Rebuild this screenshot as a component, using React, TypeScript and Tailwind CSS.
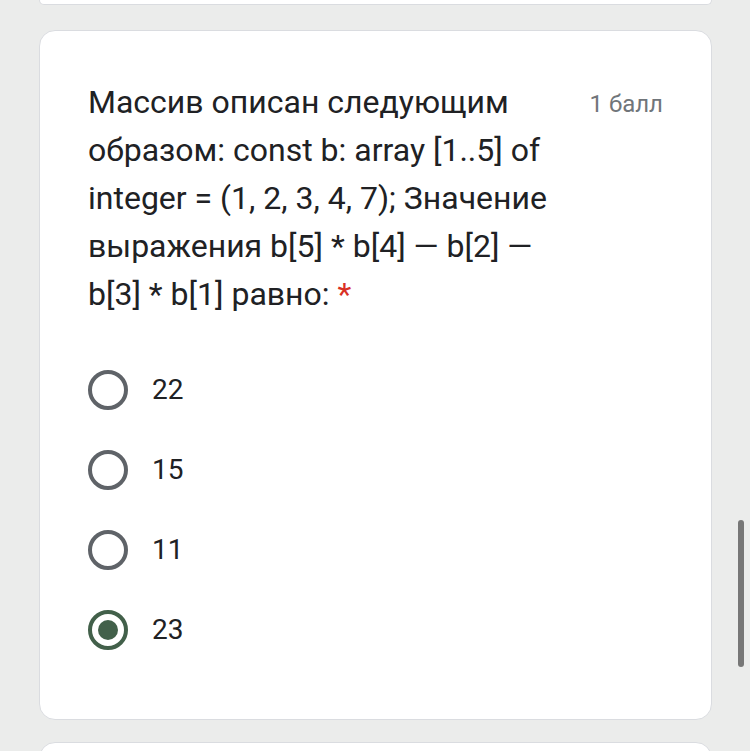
import React from "react";

const options = [
  { label: "22", checked: false },
  { label: "15", checked: false },
  { label: "11", checked: false },
  { label: "23", checked: true },
];

const lines = [
  "Массив описан следующим",
  "образом: const b: array [1..5] of",
  "integer = (1, 2, 3, 4, 7); Значение",
  "выражения b[5] * b[4] — b[2] —",
];

function Radio({ checked }: { checked: boolean }) {
  return (
    <div
      className={`w-[40px] h-[40px] rounded-full border-[4px] flex items-center justify-center ${
        checked ? "border-[#42604a]" : "border-[#5f6368]"
      }`}
    >
      {checked && <div className="w-[20px] h-[20px] rounded-full bg-[#42604a]" />}
    </div>
  );
}

export default function App() {
  return (
    <div
      className="relative w-[750px] h-[751px] overflow-hidden bg-[#ebeceb]"
      style={{ fontFamily: "Roboto, 'Noto Sans', sans-serif" }}
    >
      <div className="flex flex-col pl-[39px] pr-[38px]">
        <div className="h-[5px] bg-white border-[1.5px] border-t-0 border-[#dadce0] rounded-b-[16px]" />
        <div className="mt-[25px] h-[690px] bg-white border-[1.5px] border-[#dadce0] rounded-[16px] px-[48px] pt-[47px]">
          <div className="flex justify-between">
            <div className="text-[32px] leading-[48px] text-[#202124] whitespace-nowrap">
              {lines.map((l) => (
                <div key={l}>{l}</div>
              ))}
              <div>
                b[3] * b[1] равно: <span className="text-[#d93025]">*</span>
              </div>
            </div>
            <div className="pt-[12px] text-[24px] leading-[28px] text-[#70757a]">1 балл</div>
          </div>
          <div className="mt-[32px] flex flex-col">
            {options.map((o) => (
              <div key={o.label} className="h-[80px] flex items-center gap-[24px]">
                <Radio checked={o.checked} />
                <span className="text-[28px] text-[#202124]">{o.label}</span>
              </div>
            ))}
          </div>
        </div>
        <div className="mt-[22px] h-[40px] bg-white border-[1.5px] border-[#dadce0] rounded-t-[16px]" />
      </div>
      <div className="absolute left-[738px] top-[520px] w-[6px] h-[147px] rounded-full bg-[#777]" />
    </div>
  );
}
